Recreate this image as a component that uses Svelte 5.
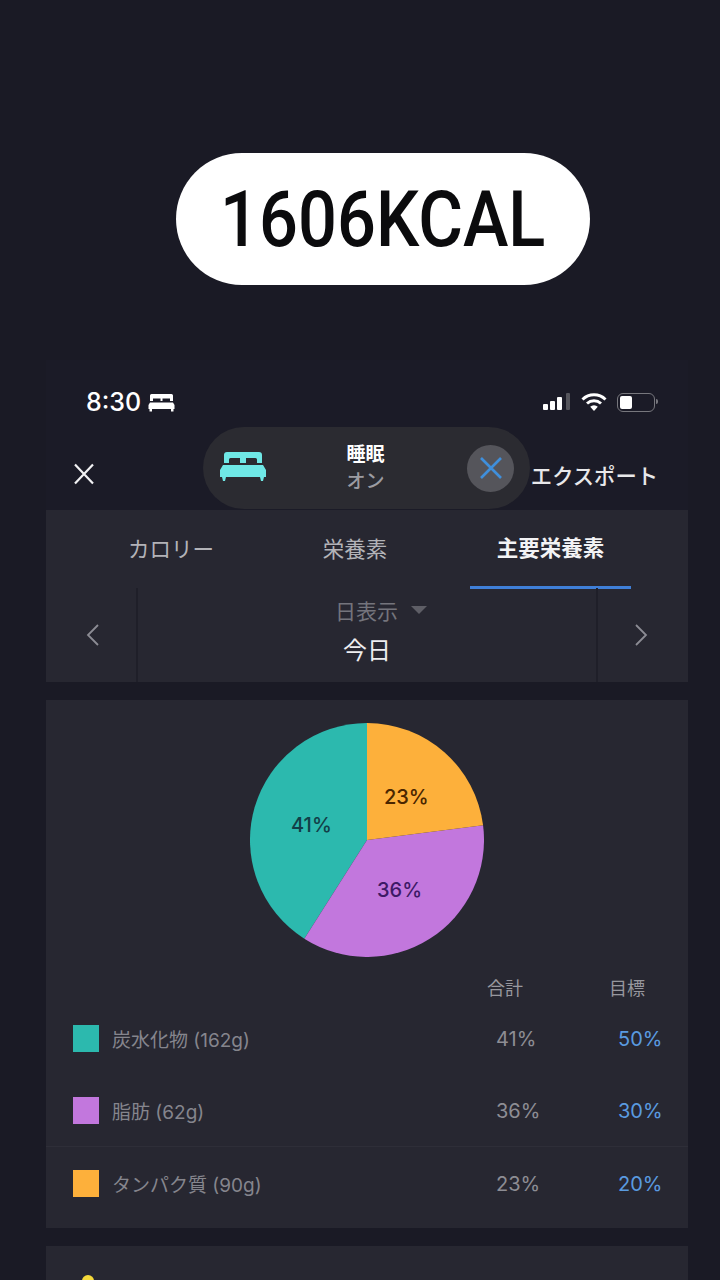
<script>
  const tabs = [
    { label: 'カロリー', active: false },
    { label: '栄養素', active: false },
    { label: '主要栄養素', active: true }
  ];

  const macros = [
    { name: '炭水化物 (162g)', color: '#2cb9ae', total: 41, goal: 50 },
    { name: '脂肪 (62g)', color: '#c277dd', total: 36, goal: 30 },
    { name: 'タンパク質 (90g)', color: '#fdb03b', total: 23, goal: 20 }
  ];

  // pie geometry, starts at 12 o'clock and goes clockwise
  const R = 117;
  function point(pct) {
    const a = (pct / 100) * Math.PI * 2;
    return `${(R + R * Math.sin(a)).toFixed(2)} ${(R - R * Math.cos(a)).toFixed(2)}`;
  }
  function slice(from, to) {
    const large = to - from > 50 ? 1 : 0;
    return `M${R} ${R}L${point(from)}A${R} ${R} 0 ${large} 1 ${point(to)}Z`;
  }
</script>

<div class="page">
  <div class="hero">
    <div class="pill"><span>1606KCAL</span></div>
  </div>

  <div class="screen">
    <div class="status">
      <div class="time">
        8:30
        <svg width="27" height="19" viewBox="0 0 27 19" fill="#fff">
          <path d="M3.500 1h20a1.500 1.500 0 0 1 1.500 1.500V8h-3V5.500h-7.500V8h-2V5.500H5V8H2V2.500A1.500 1.500 0 0 1 3.500 1z" />
          <path d="M2 9.500h23l1.500 2.500v4H.5v-4z" />
          <path d="M1.500 16h2.500v2.500H1.500zM23 16h2.500v2.500H23z" />
        </svg>
      </div>
      <div class="indicators">
        <svg width="28" height="20" viewBox="0 0 28 20">
          <rect x="0" y="12" width="5" height="6" rx="1" fill="#fff" />
          <rect x="7" y="9" width="5" height="9" rx="1" fill="#fff" />
          <rect x="14" y="5" width="5" height="13" rx="1" fill="#fff" />
          <rect x="23" y="1" width="4" height="17" rx="1" fill="#55555c" />
        </svg>
        <svg width="26" height="20" viewBox="0 0 26 20" fill="none" stroke="#fff" stroke-width="3">
          <path d="M1.500 7.500a16.500 16.500 0 0 1 23 0" />
          <path d="M6 11.500a10.500 10.500 0 0 1 14 0" />
          <path d="M13 19l-3.800-4.200a5.500 5.500 0 0 1 7.600 0z" fill="#fff" stroke="none" />
        </svg>
        <div class="battery"><span></span></div>
      </div>
    </div>

    <div class="nav">
      <svg width="24" height="24" viewBox="0 0 24 24" fill="none" stroke="#f1f1f3" stroke-width="2.200">
        <path d="M3 2.500l18 19M21 2.500l-18 19" />
      </svg>
      <span class="export">エクスポート</span>
    </div>

    <div class="focus">
      <svg class="focus-bed" width="46" height="34" viewBox="0 0 46 34" fill="#6fe8e6">
        <path d="M7 2h32a3 3 0 0 1 3 3v8h-5V9.500a1.500 1.500 0 0 0-1.500-1.500H26v5h-6V8H10.500A1.500 1.500 0 0 0 9 9.500V13H4V5a3 3 0 0 1 3-3z" />
        <path d="M3 15h40l3 5v7H0v-7z" />
        <path d="M2 27h4l-1 4H3zM40 27h4l-1 4h-2z" />
      </svg>
      <div class="focus-text">
        <span class="focus-title">睡眠</span>
        <span class="focus-state">オン</span>
      </div>
      <div class="focus-close">
        <svg width="24" height="24" viewBox="0 0 24 24" fill="none" stroke="#3f8fdc" stroke-width="2.600">
          <path d="M2 2l20 20M22 2L2 22" />
        </svg>
      </div>
    </div>

    <section class="card top">
      <div class="tabs">
        {#each tabs as tab}
          <div class="tab" class:active={tab.active}>{tab.label}</div>
        {/each}
      </div>
      <div class="dates">
        <div class="arrow left">
          <svg width="14" height="24" viewBox="0 0 14 24" fill="none" stroke="#8c8c94" stroke-width="1.800">
            <path d="M12 2L2 12l10 10" />
          </svg>
        </div>
        <div class="date">
          <div class="range">日表示<i></i></div>
          <div class="today">今日</div>
        </div>
        <div class="arrow right">
          <svg width="14" height="24" viewBox="0 0 14 24" fill="none" stroke="#8c8c94" stroke-width="1.800">
            <path d="M2 2l10 10L2 22" />
          </svg>
        </div>
      </div>
    </section>

    <section class="card chart">
      <div class="pie">
        <svg width="234" height="234" viewBox="0 0 234 234">
          <path d={slice(59, 100)} fill="#2cb9ae" />
          <path d={slice(23, 59)} fill="#c277dd" />
          <path d={slice(0, 23)} fill="#fdb03b" />
        </svg>
        <span class="pct carbs">41%</span>
        <span class="pct fat">36%</span>
        <span class="pct protein">23%</span>
      </div>

      <div class="table-head">
        <span>合計</span>
        <span>目標</span>
      </div>
      {#each macros as m}
        <div class="row">
          <span class="swatch" style="background: {m.color}"></span>
          <span class="name">{m.name}</span>
          <span class="total">{m.total}%</span>
          <span class="goal">{m.goal}%</span>
        </div>
      {/each}
    </section>

    <section class="card tip">
      <svg width="24" height="12" viewBox="0 0 24 12">
        <circle cx="12" cy="6" r="6" fill="#f5d93a" />
      </svg>
    </section>
  </div>
</div>

<style>
  :global(body) {
    margin: 0;
    background: #1a1a25;
  }

  .page {
    height: 1280px;
    overflow: hidden;
    font-family: Inter, "Noto Sans CJK JP", sans-serif;
    color: #fff;
  }

  .hero {
    display: flex;
    justify-content: center;
    padding: 153px 0 0 45px;
    height: 207px;
    box-sizing: content-box;
  }

  .pill {
    width: 414px;
    height: 132px;
    border-radius: 66px;
    background: #fff;
    color: #0b0b0d;
    font-family: Roboto, sans-serif;
    font-weight: 500;
    font-size: 77px;
    line-height: 134px;
    text-align: center;
  }

  .pill span {
    display: inline-block;
    transform: scaleX(0.89);
  }

  .screen {
    position: relative;
    margin: 0 32px 0 46px;
  }

  .status {
    display: flex;
    justify-content: space-between;
    align-items: center;
    height: 70px;
    box-sizing: border-box;
    padding: 14px 33px 0 40px;
    background: #1b1b27;
  }

  .time {
    display: flex;
    align-items: center;
    gap: 7px;
    font-size: 25px;
    font-weight: 500;
  }

  .indicators {
    display: flex;
    align-items: center;
    gap: 10px;
  }

  .battery {
    position: relative;
    width: 38px;
    height: 19px;
    border: 1.500px solid #77777d;
    border-radius: 6px;
    box-sizing: border-box;
    padding: 2px;
  }

  .battery::after {
    content: '';
    position: absolute;
    right: -4px;
    top: 5px;
    width: 2px;
    height: 5px;
    background: #77777d;
    border-radius: 0 2px 2px 0;
  }

  .battery span {
    display: block;
    width: 12px;
    height: 100%;
    background: #fff;
    border-radius: 2px;
  }

  .nav {
    display: flex;
    justify-content: space-between;
    align-items: center;
    height: 80px;
    box-sizing: border-box;
    padding: 8px 30px 0 26px;
    background: #1b1b27;
  }

  .export {
    font-size: 21.3px;
    font-weight: 500;
    color: #e8e8ea;
  }

  /* the sleep-focus banner floats over the nav */
  .focus {
    position: absolute;
    left: 157px;
    top: 67px;
    width: 327px;
    height: 82px;
    border-radius: 41px;
    background: #2b2b31;
    display: flex;
    align-items: center;
    box-sizing: border-box;
    padding: 0 16px 0 17px;
  }

  .focus-bed {
    margin-top: -3px;
  }

  .focus-text {
    flex: 1;
    display: flex;
    flex-direction: column;
    align-items: center;
    padding-right: 2px;
    line-height: 27px;
    font-size: 19px;
    font-weight: 500;
  }

  .focus-title {
    color: #fff;
    font-size: 19px;
    font-weight: 700;
  }

  .focus-state {
    color: #9c9ca2;
  }

  .focus-close {
    width: 47px;
    height: 47px;
    border-radius: 50%;
    background: #55555b;
    display: flex;
    align-items: center;
    justify-content: center;
  }

  .card {
    background: #272731;
  }

  .tabs {
    display: flex;
    height: 78px;
    padding: 0 57px 0 33px;
  }

  .tab {
    flex: 0 0 184px;
    display: flex;
    align-items: center;
    justify-content: center;
    font-size: 21.5px;
    color: #b3b3b8;
    margin-bottom: -1px;
    padding-bottom: 4px;
    box-sizing: border-box;
  }

  .tab.active {
    flex: 0 0 161px;
    margin-left: 23px;
    color: #f3f3f5;
    font-weight: 700;
    border-bottom: 3px solid #3f7fd8;
  }

  .dates {
    display: flex;
    height: 94px;
  }

  .arrow {
    flex: 0 0 92px;
    display: flex;
    align-items: center;
    justify-content: center;
    box-sizing: border-box;
  }

  .arrow.left {
    border-right: 2px solid #1f1f29;
    padding-left: 4px;
  }

  .arrow.right {
    border-left: 2px solid #1f1f29;
    padding-right: 4px;
  }

  .date {
    flex: 1;
    display: flex;
    flex-direction: column;
    align-items: center;
  }

  .range {
    display: flex;
    align-items: center;
    gap: 13px;
    height: 44px;
    font-size: 21px;
    color: #74747c;
    padding-left: 28px;
  }

  .range i {
    width: 0;
    height: 0;
    border-left: 8px solid transparent;
    border-right: 8px solid transparent;
    border-top: 8px solid #5e5e66;
  }

  .today {
    margin-top: 3px;
    font-size: 24px;
    line-height: 32px;
    color: #eeeef0;
  }

  .chart {
    margin-top: 18px;
    height: 528px;
    padding: 23px 26px 0;
    box-sizing: border-box;
  }

  .pie {
    position: relative;
    width: 234px;
    height: 234px;
    margin-left: 178px;
  }

  .pie svg {
    display: block;
  }

  .pct {
    position: absolute;
    font-size: 20px;
    font-weight: 500;
    line-height: 22px;
  }

  .carbs { left: 41px; top: 91px; color: #123f48; }
  .fat { left: 127px; top: 156px; color: #3d1a66; }
  .protein { left: 134px; top: 63px; color: #4a2600; }

  .table-head {
    display: grid;
    grid-template-columns: 1fr 40px 40px;
    column-gap: 82px;
    margin-top: 19px;
    padding-right: 13px;
    font-size: 18px;
    line-height: 26px;
    color: #97979e;
  }

  .table-head span:first-child {
    grid-column: 2;
  }

  .row {
    display: grid;
    grid-template-columns: 27px 1fr 109px 48px;
    align-items: center;
    column-gap: 13px;
    height: 72px;
    font-size: 19px;
    margin-right: -4px;
  }

  .row + .row + .row {
    border-top: 1px solid #2e2e38;
    margin: 0 -26px;
    padding: 0 22px 0 26px;
  }

  .row:first-of-type {
    margin-top: 5px;
  }

  .swatch {
    width: 26px;
    height: 27px;
    justify-self: end;
  }

  .name {
    color: #85858d;
  }

  .total,
  .goal {
    font-size: 20px;
    padding-top: 2px;
  }

  .total {
    color: #8d8d94;
  }

  .goal {
    color: #5a9be0;
  }

  .tip {
    margin-top: 18px;
    height: 60px;
    padding: 29px 0 0 30px;
    box-sizing: border-box;
  }

  .tip svg {
    display: block;
  }
</style>
